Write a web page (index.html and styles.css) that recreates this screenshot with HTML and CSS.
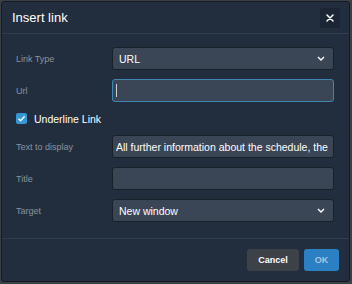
FILE: index.html
```html
<!DOCTYPE html>
<html lang="en">
  <head>
    <meta charset="UTF-8" />
    <meta name="viewport" content="width=device-width, initial-scale=1.0" />
    <title>Insert link</title>
    <link rel="stylesheet" href="styles.css">
  </head>
  <body>
    <div class="dialog">
      <div class="dialog-header">
        <h3>Insert link</h3>
        <div class="close">
          <svg width="8" height="8" viewBox="0 0 8 8">
            <path d="M1 1L7 7M7 1L1 7" stroke="#ffffff" stroke-width="1.5" stroke-linecap="round" />
          </svg>
        </div>
      </div>
      <div class="dialog-body">
        <div class="row">
          <label>Link Type</label>
          <div class="field select">
            <span>URL</span>
            <svg width="8" height="5" viewBox="0 0 8 5">
              <path d="M1 1L4 4L7 1" stroke="#ffffff" stroke-width="1.4" fill="none" />
            </svg>
          </div>
        </div>
        <div class="row">
          <label>Url</label>
          <div class="field text focused"><span class="caret"></span></div>
        </div>
        <div class="check-row">
          <span class="checkbox">
            <svg width="9" height="9" viewBox="0 0 9 9">
              <path d="M1.5 4.8L3.6 6.8L7.6 2.2" stroke="#ffffff" stroke-width="1.4" fill="none" />
            </svg>
          </span>
          <span>Underline Link</span>
        </div>
        <div class="row">
          <label>Text to display</label>
          <div class="field text"><span class="value">All further information about the schedule, the</span></div>
        </div>
        <div class="row">
          <label>Title</label>
          <div class="field text"></div>
        </div>
        <div class="row">
          <label>Target</label>
          <div class="field select">
            <span>New window</span>
            <svg width="8" height="5" viewBox="0 0 8 5">
              <path d="M1 1L4 4L7 1" stroke="#ffffff" stroke-width="1.4" fill="none" />
            </svg>
          </div>
        </div>
      </div>
      <div class="dialog-footer">
        <button class="btn cancel">Cancel</button>
        <button class="btn ok">OK</button>
      </div>
    </div>
  </body>
</html>
```

FILE: styles.css
```css
html,
body {
  margin: 0;
  padding: 0;
  background-color: #3b4047;
  font-family: "Liberation Sans", Arial, sans-serif;
}
.dialog {
  margin: 1px 2px 0 1px;
  height: 281px;
  box-sizing: border-box;
  background-color: #222e3d;
  border: 1px solid #141a22;
  border-radius: 3px;
  display: flex;
  flex-direction: column;
}
.dialog-header {
  height: 31px;
  display: flex;
  align-items: center;
  justify-content: space-between;
  padding: 0 9px 0 10px;
  border-bottom: 1px solid #2f3f52;
}
.dialog-header h3 {
  margin: 0;
  font-size: 13px;
  font-weight: normal;
  color: #ffffff;
}
.close {
  width: 20px;
  height: 20px;
  background-color: #1b2533;
  border-radius: 2px;
  display: flex;
  align-items: center;
  justify-content: center;
}
.dialog-body {
  flex: 1;
  padding: 13px 15px 0 14px;
  display: flex;
  flex-direction: column;
  gap: 9px;
  border-bottom: 1px solid #2f3f52;
}
.row {
  display: flex;
  align-items: center;
}
.row label {
  width: 96px;
  flex-shrink: 0;
  font-size: 9px;
  color: #8a939d;
}
.field {
  flex: 1;
  height: 23px;
  box-sizing: border-box;
  background-color: #3a4555;
  border: 1px solid #18202a;
  border-radius: 3px;
  display: flex;
  align-items: center;
  overflow: hidden;
  font-size: 10.5px;
  color: #ffffff;
  white-space: nowrap;
}
.select {
  justify-content: space-between;
  padding: 0 8px 0 6px;
}
.text {
  padding: 0 3px;
}
.focused {
  border-color: #3f86b3;
}
.caret {
  width: 1px;
  height: 13px;
  background-color: #c9ced4;
}
.check-row {
  height: 15px;
  display: flex;
  align-items: center;
  gap: 7px;
  font-size: 10.5px;
  color: #ffffff;
}
.checkbox {
  width: 11px;
  height: 11px;
  border-radius: 2px;
  background-color: #3597d6;
  display: flex;
  align-items: center;
  justify-content: center;
}
.dialog-footer {
  height: 42px;
  display: flex;
  align-items: center;
  justify-content: flex-end;
  gap: 5px;
  padding-right: 10px;
}
.btn {
  height: 22px;
  border: none;
  border-radius: 3px;
  font-family: "Liberation Sans", Arial, sans-serif;
  font-size: 9px;
  font-weight: bold;
  padding: 0;
}
.cancel {
  width: 52px;
  background-color: #3c4248;
  color: #ffffff;
}
.ok {
  width: 35px;
  background-color: #2b7fc3;
  color: #a3c7e8;
}
```
